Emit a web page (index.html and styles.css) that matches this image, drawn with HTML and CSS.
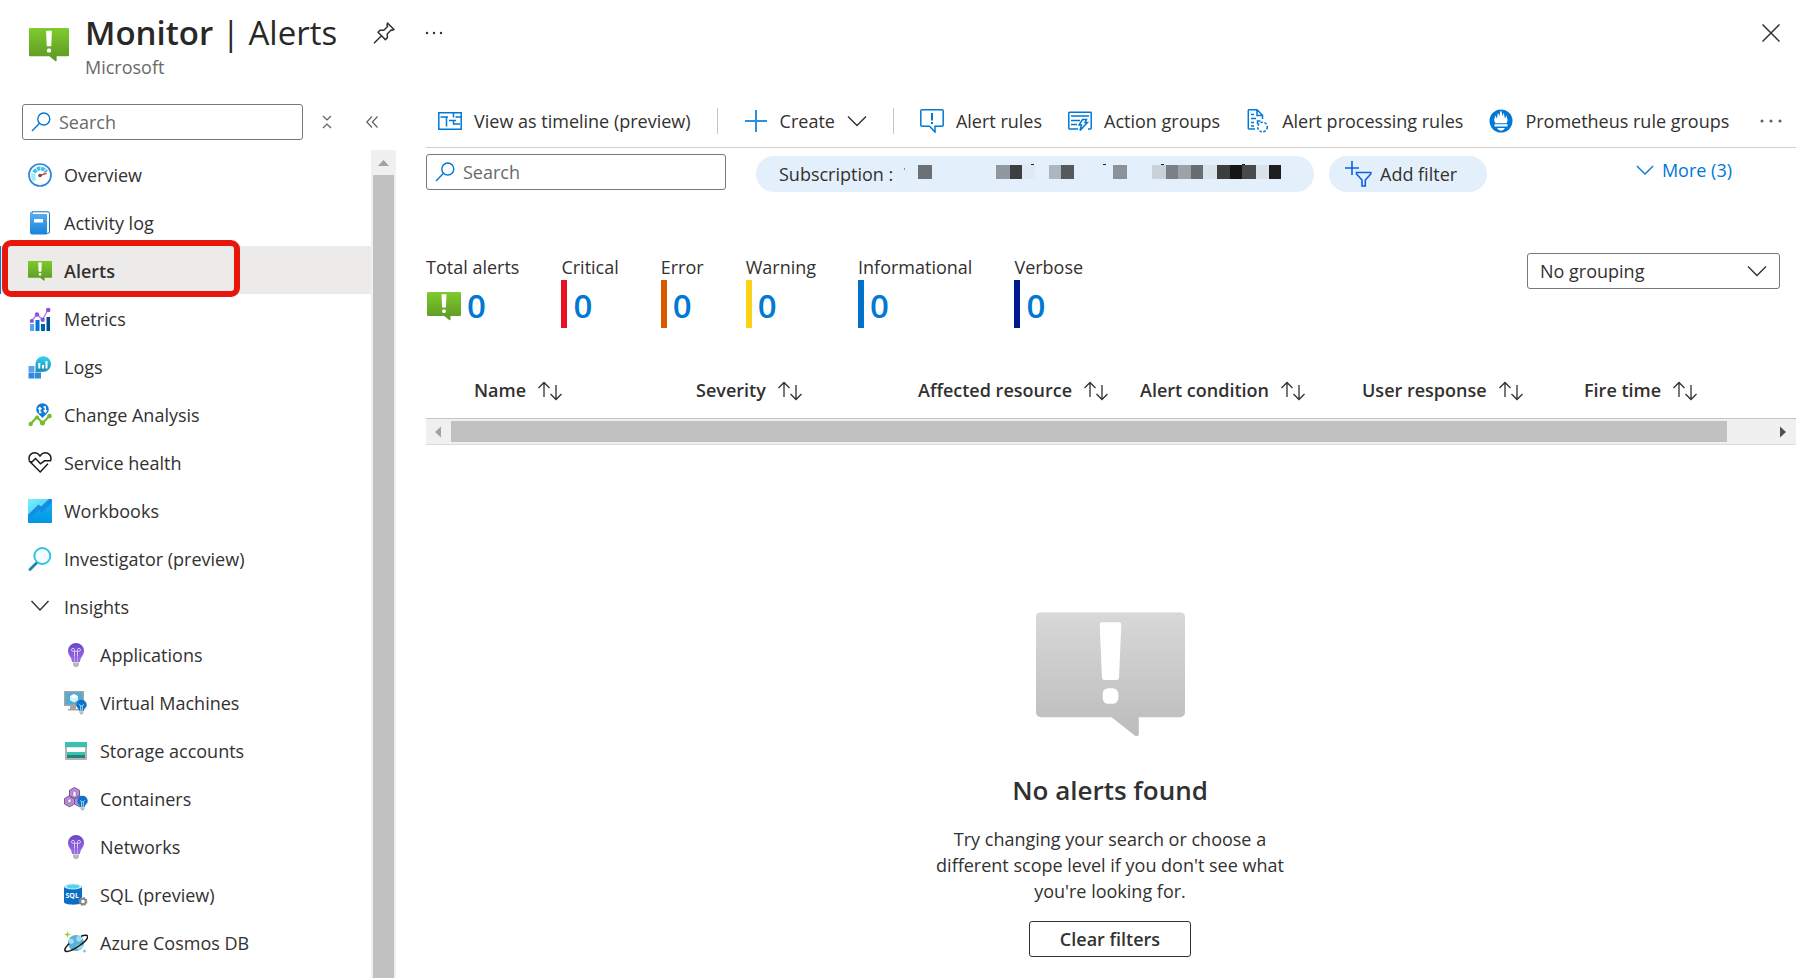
FILE: index.html
```html
<!DOCTYPE html>
<html lang="en">
<head>
<meta charset="utf-8">
<title>Monitor | Alerts</title>
<link rel="stylesheet" href="styles.css">
</head>
<body>
<svg class="defs" aria-hidden="true">
  <defs>
    <linearGradient id="green" x1="0" y1="0" x2="0" y2="1"><stop offset="0" stop-color="#7fcb2e"/><stop offset="1" stop-color="#5c9623"/></linearGradient>
    <linearGradient id="grey" x1="0" y1="0" x2="0" y2="1"><stop offset="0" stop-color="#d8d8d8"/><stop offset="1" stop-color="#bcbcbc"/></linearGradient>
    <linearGradient id="blue" x1="0" y1="0" x2="0" y2="1"><stop offset="0" stop-color="#5eb0f0"/><stop offset="1" stop-color="#1683dc"/></linearGradient>
    <linearGradient id="teal" x1="0" y1="0" x2="0" y2="1"><stop offset="0" stop-color="#32d4f5"/><stop offset="1" stop-color="#198ab3"/></linearGradient>
    <linearGradient id="sky" x1="0" y1="0" x2="1" y2="1"><stop offset="0" stop-color="#7ceeff"/><stop offset="1" stop-color="#32c8f0"/></linearGradient>
    <linearGradient id="book" x1="0" y1="0" x2="0" y2="1"><stop offset="0" stop-color="#16b6f4"/><stop offset="1" stop-color="#0294e4"/></linearGradient>
    <linearGradient id="violet" x1="0" y1="0" x2="0" y2="1"><stop offset="0" stop-color="#6a46c4"/><stop offset="1" stop-color="#a070ea"/></linearGradient>
    <symbol id="bubble" viewBox="0 0 40 34">
      <path d="M1.300 0h37.400A1.300 1.300 0 0 1 40 1.300v25.600a1.300 1.300 0 0 1-1.300 1.300H27.600v4.500q-.1.900-1 .5L20.300 28.200h-19A1.300 1.300 0 0 1 0 26.900V1.300A1.300 1.300 0 0 1 1.300 0z"/>
      <path fill="#fff" d="M17.700 2.700h4.600q.6 0 .6.600l-.6 14.200q0 .7-.6.700h-3.400q-.6 0-.6-.7l-.6-14.200q0-.6.600-.6z"/>
      <rect fill="#fff" x="17.900" y="20.400" width="4.200" height="4.200" rx="1.500"/>
    </symbol>
    <symbol id="search" viewBox="0 0 20 20"><g fill="none" stroke="#0078d4" stroke-width="1.400"><circle cx="12.800" cy="7" r="6"/><path d="M8.500 11.300 1 19"/></g></symbol>
    <symbol id="chevron" viewBox="0 0 20 12"><path d="m1 1.500 9 9 9-9" fill="none" stroke="currentColor" stroke-width="1.400"/></symbol>
    <symbol id="sort" viewBox="0 0 26 20"><g fill="none" stroke="#323130" stroke-width="1.300"><path d="M7 16V1.500M1.500 7 7 1.500 12.500 7"/><path d="M19 4v14.500M13.500 13l5.500 5.500 5.500-5.500"/></g></symbol>
    <symbol id="bulb" viewBox="0 0 24 24">
      <path fill="url(#violet)" d="M12 0a8 8 0 0 1 8 8c0 4.500-3.600 5.500-4 11H8C7.600 13.500 4 12.500 4 8a8 8 0 0 1 8-8z"/>
      <path fill="none" stroke="#e3d2fb" stroke-width=".9" d="M10.500 13V8.300H9A1.500 1.500 0 1 1 10.500 6.800v1.500h3V6.800A1.500 1.500 0 1 1 15 8.300h-1.500V13"/>
      <path fill="none" stroke="#c3a3f3" stroke-width=".9" d="M10.500 13v5.500M13.500 13v5.500"/>
      <path fill="#b9b9b9" d="M9 19.500h6V22l-1.500 2h-3L9 22z"/>
    </symbol>
    <symbol id="minibulb" viewBox="0 0 12 16">
      <path fill="#0f72c9" d="M6 0a5.700 5.700 0 0 1 5.700 5.500C11.700 9 9 9 8.700 12H3.300C3 9 .3 9 .3 5.500A5.700 5.700 0 0 1 6 0z"/>
      <path fill="none" stroke="#9fe0ff" d="M5 12V6.500L3.200 5M7 12V6.500L8.800 5M5 6.500h2"/>
      <path stroke="#8c8c8c" d="M3.500 13.500h5M4.500 15.300h3"/>
    </symbol>
  </defs>
</svg>

<header class="blade-header">
  <svg class="header-icon" fill="url(#green)"><use href="#bubble"/></svg>
  <div class="heading">
    <div class="title-row">
      <h1><strong>Monitor</strong> | Alerts</h1>
      <button class="icon-button" aria-label="Pin">
        <svg width="22" height="22" viewBox="0 0 22 22" fill="none" stroke="#323130" stroke-width="1.500" stroke-linejoin="round"><path d="M14.500 1 21 7.500l-2 .8-.8-.3-4 4 .2 3.600-2 2L5 10.200l2-2 3.800.1 3.800-3.900-.6-1.300zM8.500 13.800 1 21.200"/></svg>
      </button>
      <button class="icon-button" aria-label="More actions">
        <svg width="18" height="4" viewBox="0 0 18 4" fill="#323130"><circle cx="2" cy="2" r="1.200"/><circle cx="9" cy="2" r="1.200"/><circle cx="16" cy="2" r="1.200"/></svg>
      </button>
    </div>
    <p class="subtitle">Microsoft</p>
  </div>
  <button class="icon-button close" aria-label="Close">
    <svg width="18" height="18" viewBox="0 0 18 18" fill="none" stroke="#323130" stroke-width="1.500"><path d="m.5.5 17 17m0-17-17 17"/></svg>
  </button>
</header>

<div class="blade">
  <aside class="sidebar">
    <div class="menu-search">
      <div class="search-box"><svg><use href="#search"/></svg><input type="text" placeholder="Search" aria-label="Search menu"></div>
      <button class="icon-button" aria-label="Expand all">
        <svg width="10" height="14" viewBox="0 0 10 14" fill="none" stroke="#605e5c" stroke-width="1.200"><path d="m1 1 4 4 4-4M1 13l4-4 4 4"/></svg>
      </button>
      <button class="icon-button" aria-label="Collapse menu">
        <svg width="12" height="12" viewBox="0 0 12 12" fill="none" stroke="#605e5c" stroke-width="1.200"><path d="M6 .5.800 6 6 11.500M11.500.5 6.300 6l5.200 5.500"/></svg>
      </button>
    </div>
    <div class="menu-body">
      <nav class="menu" aria-label="Monitor">
        <a href="#overview"><svg viewBox="0 0 24 24"><circle cx="12" cy="12" r="11" fill="#fff" stroke="#2f86dc" stroke-width="1.700"/><path d="M6.800 17.500A8 8 0 0 1 5.500 10.500" stroke="#9cebff" stroke-width="4" fill="none"/><path d="M6 9.500A7 7 0 0 1 18.300 9" fill="none" stroke="#3ec3e8" stroke-width="4" stroke-dasharray="3.600 .7"/><path d="m12 12.500 6.500-2.200" stroke="#e8403a" stroke-width="1.500"/><circle cx="12" cy="12.500" r="1.800" fill="#555"/></svg>Overview</a>
        <a href="#activity"><svg viewBox="0 0 24 24"><path d="M4 .8h16q1.500 0 1.500 1.500v18.500q0 1.500-1.500 1.500H4z" fill="#fff" stroke="#1b70b8"/><path d="M3.500.500Q2 1 2 2.500V21q0 2.500 2.500 2.500H18q1 0 1-1V4q0-1-1-1H4z" fill="url(#blue)"/><path fill="#fff" d="M6 8h9v3.500H6z"/></svg>Activity log</a>
        <a href="#alerts" class="selected" aria-current="page"><svg viewBox="0 0 40 34" fill="url(#green)"><use href="#bubble"/></svg>Alerts</a>
        <a href="#metrics"><svg viewBox="0 0 24 24"><path fill="#5ea0ef" d="M2 17h4v7H2z"/><path fill="#0078d4" d="M7.500 13h4v11h-4z"/><path fill="#0063b0" d="M13 17h4v7h-4z"/><path fill="#00508e" d="M18.500 10H22v14h-3.500z"/><path d="m3.500 14 5.500-6.500 5.500 5L20 3" fill="none" stroke="#a67af4" stroke-width="1.300"/><g fill="#8b52dd"><circle cx="3.800" cy="14" r="2.100"/><circle cx="9" cy="7.500" r="2.200"/><circle cx="14.700" cy="12.700" r="2.200"/><circle cx="20.200" cy="3" r="2.300"/></g></svg>Metrics</a>
        <a href="#logs"><svg viewBox="0 0 24 24"><path fill="#5ea0ef" d="M.5 11h6v6h-6z"/><path fill="#2f8ae0" d="M.5 17.500h6v6h-6zM7 17.500h6v6H7z"/><path fill="url(#teal)" d="M7.500 17V8a7.800 7.800 0 1 1 8 8.800z"/><path fill="#fff" d="M10.300 8h2v5.500h-2zM14 10h2v3.500h-2zM17.500 6h2v7.500h-2z"/></svg>Logs</a>
        <a href="#changes"><svg viewBox="0 0 24 24"><path d="m2.500 21 6.500-7 5.500 6 7-7" fill="none" stroke="#6fbb2c" stroke-width="2"/><g fill="#76bc2d"><circle cx="2.700" cy="21" r="2.200"/><circle cx="9" cy="14.500" r="2"/><circle cx="14.500" cy="20" r="2.500"/><circle cx="21.500" cy="13" r="2.300"/></g><path fill="#0f7ad8" d="M14.500.2a6.300 6.300 0 0 1 6.300 6.300c0 3.500-3.500 5-6.300 8.500-2.800-3.500-6.300-5-6.300-8.500A6.300 6.300 0 0 1 14.500.2z"/><path fill="none" stroke="#fff" stroke-width="1.400" d="M13.500 9.500h-1.700V5M10.300 6.300 11.800 4.500l1.600 1.800M15.500 4h1.800v4.500M15.700 7.300l1.600 1.800 1.500-1.800"/></svg>Change Analysis</a>
        <a href="#health"><svg viewBox="0 0 24 24" fill="none" stroke="#1b1a19" stroke-width="1.500"><path d="M1.500 9.800C-.3 4.500 3.500 1.500 7.200 1.700 9.500 1.900 11 3.500 12 5c1-1.500 2.500-3.100 4.800-3.300 3.700-.2 7.500 2.800 5.700 8.100H16.500l-4 3L7.500 7.500l-3.300 3.200H2l10.200 10.300 7.700-8.300"/></svg>Service health</a>
        <a href="#workbooks"><svg viewBox="0 0 24 24"><rect width="24" height="24" rx="1" fill="url(#book)"/><path fill="url(#sky)" d="M1 0h22v.500L13 10.500 10.500 6 0 16V1q0-1 1-1z"/><path fill="#168be3" d="m0 16 10.500-10.500 2.500 2L21 0h2l1 1v2.500L13.500 14 11 10.500 0 21z"/></svg>Workbooks</a>
        <a href="#investigator"><svg viewBox="0 0 24 24" fill="none"><path d="M9.500 15 2 22.500" stroke="#1e84b5" stroke-width="2.800" stroke-linecap="round"/><circle cx="14.300" cy="9" r="8" fill="#f5fdff" stroke="#2cc3e4" stroke-width="1.900"/></svg>Investigator (preview)</a>
        <button class="group" aria-expanded="true"><svg viewBox="0 0 24 24" fill="none" stroke="#323130" stroke-width="1.400"><path d="m3.500 6 8.500 9 8.500-9"/></svg>Insights</button>
        <div class="submenu">
          <a href="#applications"><svg><use href="#bulb"/></svg>Applications</a>
          <a href="#vms"><svg viewBox="0 0 24 24"><path fill="#a5a5a5" d="M0 0h20v15H0zM6 15h6v3h3v1.500H4V18h2z"/><path fill="#50acd3" d="M1.500 1.500h17v12h-17z"/><path fill="#d6f2fb" d="m10 3 4 2.200v4L10 11.500 6 9.200v-4z"/><path fill="#fff" d="m10 3 4 2.200-4 2.300-4-2.300z"/><use href="#minibulb" x="12" y="8" width="11" height="16"/></svg>Virtual Machines</a>
          <a href="#storage"><svg viewBox="0 0 24 24"><path fill="#b3b3b3" d="M1 8h22v12q0 1-1 1H2q-1 0-1-1z"/><path fill="#e4e4e4" d="M3 8h18v11H3z"/><path fill="#fff" d="M3 9h18v4H3z"/><path fill="#37c2b1" d="M1 3h22v5H1zM3 13h18v3H3z"/><path fill="#258277" d="M3 16h18v3H3z"/></svg>Storage accounts</a>
          <a href="#containers"><svg viewBox="0 0 24 24"><g fill="#b48fd0" stroke="#83509f" stroke-width="1"><path d="m10.500.5 5 2.800v6l-5 2.700-5-2.700v-6zM5.500 8.700l5 2.800v5.500l-5 2.800-5-2.800v-5.500zM15.500 8.700l5 2.800v5.500l-5 2.800-5-2.800v-5.500z"/></g><path d="M9 9V5.500L10.500 4 12 5.500V9M4 16v-3l3-1.500V15z" fill="#fff" stroke="#83509f" stroke-width=".5"/><use href="#minibulb" x="13" y="8" width="11" height="16"/></svg>Containers</a>
          <a href="#networks"><svg><use href="#bulb"/></svg>Networks</a>
          <a href="#sql"><svg viewBox="0 0 24 24"><path fill="#0a6fc4" d="M0 3.500h18V19c0 3.500-18 3.500-18 0z"/><ellipse cx="9" cy="3.500" rx="9" ry="3" fill="#d4e7f4"/><ellipse cx="9" cy="3.500" rx="6.500" ry="2" fill="#4dd7f0"/><text x="1.500" y="15" class="sql-mark">SQL</text><circle cx="19" cy="18.500" r="2.800" fill="#fff" stroke="#8a8a8a" stroke-width="2"/><circle cx="19" cy="18.500" r="3.800" fill="none" stroke="#8a8a8a" stroke-width="1.400" stroke-dasharray="1.500 1.480"/></svg>SQL (preview)</a>
          <a href="#cosmos"><svg viewBox="0 0 24 24"><circle cx="12" cy="12" r="8" fill="#59b3d8"/><path fill="#a5dbf0" d="M5 8q4-1 5 2t-5 3zM13 5q4 0 6 3l-4 3-3-2zM12 15l4-2 3 2q-1 3-5 4z"/><path fill="none" stroke="#1b1a19" stroke-width="1.500" d="M17 5.300c4-1.500 7.300-1.500 6.600 1.200C22.500 11 5.500 22.500 1.300 20c-1.500-1.200.7-4.500 4-7.500"/><path fill="#a9cf38" d="m3.500 0 .8 2.500L7 3.500l-2.700.9L3.500 7l-.8-2.600L0 3.500l2.700-1z"/><path fill="#50c8ef" d="m20.500 18 .6 1.500 1.700.6-1.700.6-.6 1.600-.6-1.600-1.700-.6 1.700-.6z"/></svg>Azure Cosmos DB</a>
        </div>
        <span class="callout"></span>
      </nav>
      <div class="vscroll"><svg width="25" height="25" viewBox="0 0 25 25"><path fill="#a3a3a3" d="m12.500 10 5.500 6H7z"/></svg><div class="vthumb"></div></div>
    </div>
  </aside>

  <main class="content">
    <div class="toolbar">
      <button><svg width="24" height="18" viewBox="0 0 24 18" fill="none" stroke="#0078d4" stroke-width="1.500"><path d="M.8.8h22.400v16.400H.8zM2.500 5H10M8.500 5v9.500M15.500 1v4.500M11 8.500h7M15.500 8.500V12M15 12h7M17.500 5H23"/></svg>View as timeline (preview)</button>
      <span class="divider"></span>
      <button class="create"><svg width="24" height="24" viewBox="0 0 24 24" stroke="#2b90dd" stroke-width="2"><path d="M12 1v22M1 12h22"/></svg>Create<svg class="chev" width="20" height="12"><use href="#chevron"/></svg></button>
      <span class="divider"></span>
      <button><svg width="24" height="24" viewBox="0 0 24 24" fill="none" stroke="#0078d4" stroke-width="1.500"><path d="M2 .8h20q1.200 0 1.200 1.200v14q0 1.200-1.200 1.200h-7V23l-5.500-5.800H2Q.8 17.200.8 16V2Q.8.800 2 .8z"/><path stroke-width="2" d="M12 4v7.500M12 13v2"/></svg>Alert rules</button>
      <button><svg width="24" height="24" viewBox="0 0 24 24" fill="none" stroke="#0078d4" stroke-width="1.500"><path d="M10 20H1.500q-.7 0-.7-.7V4q0-.7.7-.7h21q.7 0 .7.700v15.300q0 .7-.7.700H20M3 7h18M3 11.500h9M3 15.500h6"/><path d="M14.500 10.500h4l-1.500 3h2.500l-7.500 8 1.500-5.500h-2.500z"/></svg>Action groups</button>
      <button><svg width="24" height="24" viewBox="0 0 24 24" fill="none" stroke="#0078d4" stroke-width="1.500"><path d="M9 20H3q-.7 0-.7-.7V1.500q0-.7.7-.7h8l5.500 5.500V10M11 1v5.500h5.500M5 5.500h3M5 9.500h5M5 13.500h3M5 17h3"/><circle cx="16.500" cy="18" r="4.800" stroke-dasharray="2.500 1.500"/><path d="M11.500 15v-3h3"/></svg>Alert processing rules</button>
      <button><svg width="24" height="24" viewBox="0 0 24 24"><circle cx="12" cy="12" r="11.500" fill="#0078d4"/><path fill="#fff" d="M6.500 14.200C4 11 6 8.500 6.300 6.500c1 1 .9 2 1.500 3 1-2 .2-3.500 1.200-5.500.8.800.8 2.500 1.300 3.300C11 5.500 10.800 3 12 1.500c1 1.500.8 3.500 1.500 5.500.7-.8.500-2 1-3 1.200 1.800.6 3.500 1.500 5.500.7-1 .6-2 1.500-3 .2 2.500 2.300 4.500 0 7.700zM5.500 15.300h13v2.200h-13zM8 19h8q-1.500 2.800-4 2.800T8 19z"/></svg>Prometheus rule groups</button>
      <button class="overflow" aria-label="More commands"><svg width="22" height="4" viewBox="0 0 22 4" fill="#605e5c"><circle cx="2" cy="2" r="1.500"/><circle cx="11" cy="2" r="1.500"/><circle cx="20" cy="2" r="1.500"/></svg></button>
    </div>

    <div class="filters">
      <div class="search-box"><svg><use href="#search"/></svg><input type="text" placeholder="Search" aria-label="Search alerts"></div>
      <button class="pill subscription">Subscription :
        <svg width="382" height="20" viewBox="0 0 382 20" aria-hidden="true" shape-rendering="crispEdges">
          <path fill="#6a7075" d="M16 3h14v14H16z"/><path fill="#dfe9f2" d="M107 3h26v14h-26z"/><path fill="#90979e" d="M94 3h14v14H94z"/><path fill="#3d3f41" d="M108 3h12v14h-12z"/>
          <path fill="#adb6bf" d="M147 3h12v14h-12z"/><path fill="#55595c" d="M159 3h13v14h-13z"/><path fill="#8c9299" d="M211 3h14v14h-14z"/>
          <path fill="#c9d2da" d="M250 3h14v14h-14z"/><path fill="#7b8087" d="M264 3h12v14h-12z"/><path fill="#9ba2a9" d="M276 3h13v14h-13z"/><path fill="#696c71" d="M289 3h12v14h-12z"/><path fill="#d9e3ec" d="M301 3h14v14h-14zM354 3h13v14h-13z"/>
          <path fill="#3b3d3f" d="M315 3h13v14h-13z"/><path fill="#151515" d="M328 3h12v14h-12z"/><path fill="#47494b" d="M340 3h14v14h-14z"/><path fill="#1e1e1e" d="M367 3h12v14h-12zM129 2h3v1h-3zM201 2h3v1h-3zM259 2h3v1h-3zM340 2h3v1h-3z"/><path fill="#8a9299" d="M2 6h1v2H2z"/>
        </svg>
      </button>
      <button class="pill"><svg width="27" height="26" viewBox="0 0 27 26" fill="none" stroke="#0f5fe0" stroke-width="1.600"><path d="M7 0v14M0 7h14M11.500 11.500h14.300v1.500l-5.500 6v6H17v-6l-5.500-6z"/></svg>Add filter</button>
      <a class="more" href="#more"><svg width="18" height="12"><use href="#chevron"/></svg>More (3)</a>
    </div>

    <section class="summary">
      <div class="stat"><span>Total alerts</span><a class="total" href="#all"><svg width="34" height="29" fill="url(#green)"><use href="#bubble"/></svg>0</a></div>
      <div class="stat critical"><span>Critical</span><a href="#critical">0</a></div>
      <div class="stat error"><span>Error</span><a href="#error">0</a></div>
      <div class="stat warning"><span>Warning</span><a href="#warning">0</a></div>
      <div class="stat info"><span>Informational</span><a href="#info">0</a></div>
      <div class="stat verbose"><span>Verbose</span><a href="#verbose">0</a></div>
      <div class="grouping">
        <select aria-label="Grouping"><option>No grouping</option></select>
        <svg width="20" height="12"><use href="#chevron"/></svg>
      </div>
    </section>

    <div class="grid">
      <table>
        <thead><tr>
          <td class="pick"></td>
          <th scope="col">Name<svg><use href="#sort"/></svg></th>
          <th scope="col">Severity<svg><use href="#sort"/></svg></th>
          <th scope="col">Affected resource<svg><use href="#sort"/></svg></th>
          <th scope="col">Alert condition<svg><use href="#sort"/></svg></th>
          <th scope="col">User response<svg><use href="#sort"/></svg></th>
          <th scope="col">Fire time<svg><use href="#sort"/></svg></th>
        </tr></thead>
      </table>
    </div>
    <div class="hscroll">
      <svg width="25" height="20" viewBox="0 0 25 20"><path fill="#a3a3a3" d="M15 4.500v11L9 10z"/></svg>
      <div class="htrack"><div class="hthumb"></div></div>
      <svg width="25" height="20" viewBox="0 0 25 20"><path fill="#505050" d="M9 4.500v11l6-5.500z"/></svg>
    </div>

    <section class="empty">
      <svg class="empty-icon" viewBox="0 0 40 34" fill="url(#grey)"><use href="#bubble"/></svg>
      <h2>No alerts found</h2>
      <p>Try changing your search or choose a different scope level if you don't see what you're looking for.</p>
      <button class="clear">Clear filters</button>
    </section>
  </main>
</div>
</body>
</html>
```
FILE: styles.css
```css
* { box-sizing: border-box; }
body {
  margin: 0;
  height: 100vh;
  display: flex;
  flex-direction: column;
  overflow: hidden;
  background: #fff;
  color: #323130;
  font: 18px/26px "Open Sans", "Noto Sans", sans-serif;
}
h1, h2, p { margin: 0; }
button, input, select { font: inherit; color: inherit; }
button { background: none; border: 0; padding: 0; }
a { color: inherit; text-decoration: none; }
svg { flex: none; display: block; }
.defs { position: absolute; width: 0; height: 0; }

.blade-header { display: flex; align-items: flex-start; padding: 8px 16px 0 29px; height: 96px; flex: none; }
.header-icon { width: 40px; height: 34px; margin-top: 20px; }
.heading { flex: 1; margin-left: 16px; }
.title-row { display: flex; align-items: center; gap: 30px; height: 48px; padding-top: 2px; }
h1 { font-size: 33px; line-height: 46px; font-weight: 400; margin-right: 6px; color: #292827; }
h1 strong { font-weight: 600; }
.subtitle { color: #6b6967; line-height: 22px; }
.close { margin-top: 16px; }

.blade { display: flex; flex: 1; min-height: 0; }
.sidebar { width: 396px; flex: none; display: flex; flex-direction: column; }
.menu-search { display: flex; align-items: center; padding: 8px 0 10px 22px; height: 54px; }
.menu-search .search-box { width: 281px; margin-right: 19px; }
.menu-search .icon-button + .icon-button { margin-left: 34px; }
.search-box { display: flex; align-items: center; height: 36px; border: 1px solid #7a7876; border-radius: 3px; padding: 0 8px; gap: 8px; }
.search-box svg { width: 20px; height: 20px; }
.search-box input { border: 0; outline: 0; padding: 0; min-width: 0; height: 32px; flex: 1; background: none; }
.search-box input::placeholder { color: #6b6967; opacity: 1; }

.menu-body { display: flex; flex: 1; min-height: 0; }
.menu { position: relative; flex: 1; overflow: hidden; }
.menu a, .group { display: flex; align-items: center; gap: 12px; width: 100%; height: 48px; padding: 2px 0 0 28px; }
.menu svg { width: 24px; height: 24px; }
.menu a.selected { background: #edebe9; font-weight: 600; border-left: 1px solid #0078d4; padding-left: 27px; }
.menu .submenu a { padding-left: 64px; }
.sql-mark { font: 700 7px "Open Sans", sans-serif; fill: #fff; }
.callout { position: absolute; left: 2px; top: 90px; width: 238px; height: 57px; border: 6px solid #e8170c; border-radius: 9px; pointer-events: none; }
.vscroll { width: 25px; background: #f0f0f0; display: flex; flex-direction: column; }
.vthumb { flex: 1; margin: 0 2px; background: #c1c1c1; }

.content { flex: 1; min-width: 0; margin-left: 30px; display: flex; flex-direction: column; }
.toolbar { display: flex; align-items: center; gap: 26px; height: 52px; padding: 0 14px 2px 12px; border-bottom: 1px solid #d2d0ce; white-space: nowrap; flex: none; }
.toolbar button { display: flex; align-items: center; gap: 12px; }
.toolbar .overflow { margin-left: auto; }
.divider { width: 1px; height: 26px; background: #c8c6c4; }

.filters { display: flex; align-items: center; height: 50px; padding-right: 64px; flex: none; white-space: nowrap; }
.filters .search-box { width: 300px; margin: 0 30px 2px 0; }
.pill { display: flex; align-items: center; gap: 8px; height: 36px; margin-top: 2px; border-radius: 18px; background: #e3f0fb; padding: 0 30px 0 16px; }
.subscription { flex: 0 1 558px; justify-content: space-between; gap: 4px; padding: 0 30px 0 23px; margin-right: 15px; }
.subscription svg { margin-bottom: 4px; }
.more { display: flex; align-items: center; gap: 8px; margin: 0 0 6px auto; color: #0078d4; }

.summary { display: flex; gap: 42px; padding: 55px 16px 0 0; flex: none; }
.stat { display: flex; flex-direction: column; padding-top: 1px; }
.stat a { display: flex; align-items: center; gap: 6px; height: 48px; padding: 4px 0 0 6px; color: #0078d4; font-size: 33px; font-weight: 600; border-left: 6px solid; border-color: inherit; }
.stat .total { border: 0; padding-left: 1px; }
.critical { border-color: #e81123; }
.error { border-color: #db5a00; }
.warning { border-color: #fcd116; }
.info { border-color: #0072c9; }
.verbose { border-color: #00188f; }
.grouping { position: relative; margin-left: auto; width: 253px; height: 36px; }
.grouping select { appearance: none; width: 100%; height: 36px; padding: 0 40px 0 12px; border: 1px solid #7a7876; border-radius: 3px; background: #fff; }
.grouping > svg { position: absolute; right: 13px; top: 12px; pointer-events: none; }

.grid { margin-top: 34px; overflow: hidden; flex: none; border-bottom: 1px solid #c8c6c4; }
table { table-layout: fixed; width: 1380px; border-collapse: collapse; }
th { width: 222px; height: 56px; padding: 0; text-align: left; font-weight: 600; white-space: nowrap; }
th svg { display: inline-block; width: 26px; height: 20px; margin-left: 11px; vertical-align: -4px; }
.pick { width: 48px; padding: 0; }
.hscroll { display: flex; align-items: center; height: 26px; background: #f0f0f0; border-bottom: 1px solid #dddbd9; flex: none; }
.htrack { flex: 1; padding-right: 44px; }
.hthumb { height: 21px; background: #c1c1c1; }

.empty { display: flex; flex-direction: column; align-items: center; padding-top: 167px; padding-right: 2px; text-align: center; }
.empty-icon { width: 149px; height: 127px; }
.empty h2 { margin-top: 33px; font-size: 26px; line-height: 36px; font-weight: 600; }
.empty p { margin: 18px 0 17px; width: 370px; }
.clear { height: 36px; padding: 0 30px; border: 1px solid #323130; border-radius: 3px; font-weight: 600; }
```
